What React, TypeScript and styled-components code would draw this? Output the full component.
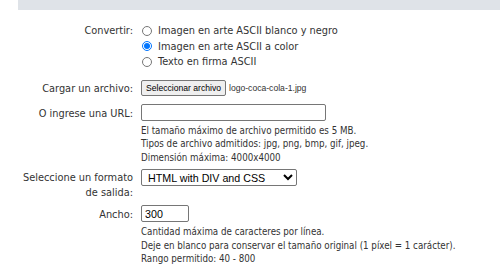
import React from 'react'
import styled, { createGlobalStyle } from 'styled-components'

const GlobalStyle = createGlobalStyle`
  html, body {
    margin: 0;
    padding: 0;
    background: #fff;
  }
  body {
    font-family: "DejaVu Sans", Verdana, sans-serif;
    font-stretch: condensed;
    color: #333;
  }
`

const TopBar = styled.div`
  margin-left: 18px;
  height: 10px;
  background: #dfe3e8;
`

const Form = styled.form`
  padding-top: 13px;
  font-size: 10.9px;
`

const Row = styled.div<{ spacing: number }>`
  display: grid;
  grid-template-columns: 115px 1fr;
  column-gap: 8px;
  margin-left: 18px;
  margin-top: ${p => p.spacing}px;
`

const Label = styled.label<{ offset?: number }>`
  text-align: right;
  line-height: 15px;
  padding-top: ${p => p.offset ?? 0}px;
`

const Field = styled.div`
  display: flex;
  flex-direction: column;
  align-items: flex-start;
`

const Choice = styled.label`
  display: flex;
  align-items: center;
  gap: 6px;
  height: 15.5px;
`

const Radio = styled.input`
  width: 10px;
  height: 10px;
  margin: 0 0 0 1px;
`

const FileLine = styled.div`
  display: flex;
  align-items: center;
  gap: 3px;
  height: 17px;
  font-family: "Liberation Sans", Arial, sans-serif;
  font-stretch: normal;
  font-size: 8.6px;
`

const FileButton = styled.button`
  height: 16px;
  padding: 0 4px;
  font: inherit;
  color: #000;
  background: #efefef;
  border: 1px solid #767676;
  border-radius: 2px;
`

const TextInput = styled.input<{ size_: number }>`
  box-sizing: border-box;
  width: ${p => p.size_}px;
  height: 17px;
  margin: 0;
  padding: 0 3px;
  font-family: "Liberation Sans", Arial, sans-serif;
  font-size: 10.7px;
  color: #000;
  border: 1px solid #767676;
  border-radius: 2px;
`

const Select = styled.select`
  box-sizing: border-box;
  width: 156px;
  height: 17px;
  margin: 0;
  padding: 0 0 0 2px;
  font-family: "Liberation Sans", Arial, sans-serif;
  font-size: 10.7px;
  color: #000;
  border: 1px solid #767676;
  border-radius: 2px;
  background: #fff;
`

const Help = styled.div`
  margin-top: 3px;
  font-size: 9.7px;
  line-height: 13.5px;
`

export default function App() {
  return (
    <>
      <GlobalStyle />
      <TopBar />
      <Form>
        <Row spacing={0}>
          <Label>Convertir:</Label>
          <Field>
            <Choice><Radio type="radio" name="mode" />Imagen en arte ASCII blanco y negro</Choice>
            <Choice><Radio type="radio" name="mode" defaultChecked />Imagen en arte ASCII a color</Choice>
            <Choice><Radio type="radio" name="mode" />Texto en firma ASCII</Choice>
          </Field>
        </Row>
        <Row spacing={10}>
          <Label offset={1}>Cargar un archivo:</Label>
          <FileLine>
            <FileButton type="button">Seleccionar archivo</FileButton>
            <span>logo-coca-cola-1.jpg</span>
          </FileLine>
        </Row>
        <Row spacing={7}>
          <Label offset={2}>O ingrese una URL:</Label>
          <Field>
            <TextInput size_={185} defaultValue="" />
            <Help>
              El tamaño máximo de archivo permitido es 5 MB.<br />
              Tipos de archivo admitidos: jpg, png, bmp, gif, jpeg.<br />
              Dimensión máxima: 4000x4000
            </Help>
          </Field>
        </Row>
        <Row spacing={5}>
          <Label offset={1}>Seleccione un formato de salida:</Label>
          <Field>
            <Select defaultValue="html">
              <option value="html">HTML with DIV and CSS</option>
              <option value="table">HTML with TABLE</option>
              <option value="txt">Plain text</option>
            </Select>
          </Field>
        </Row>
        <Row spacing={5}>
          <Label offset={2}>Ancho:</Label>
          <Field>
            <TextInput size_={48} defaultValue="300" />
            <Help>
              Cantidad máxima de caracteres por línea.<br />
              Deje en blanco para conservar el tamaño original (1 píxel = 1 carácter).<br />
              Rango permitido: 40 - 800
            </Help>
          </Field>
        </Row>
      </Form>
    </>
  )
}
